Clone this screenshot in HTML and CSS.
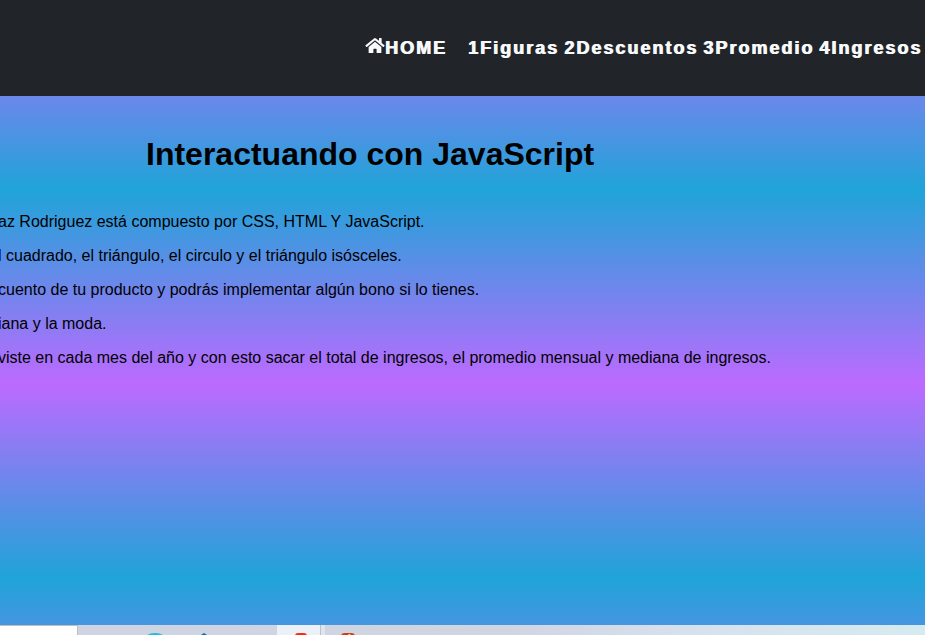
FILE: index.html
```html
<!DOCTYPE html>
<html lang="es">
<head>
<meta charset="utf-8">
<title>Interactuando con JavaScript</title>
<link rel="stylesheet" href="styles.css">
</head>
<body>
<header class="site-header">
  <nav class="menu">
    <a class="home" href="#"><svg class="home-icon" viewBox="0 0 576 512" aria-hidden="true"><path d="M280 148 96 300v164a16 16 0 0 0 16 16h112a16 16 0 0 0 16-16v-96a16 16 0 0 1 16-16h64a16 16 0 0 1 16 16v96a16 16 0 0 0 16 16h112a16 16 0 0 0 16-16V300L296 148a12 12 0 0 0-16 0z"/><path d="M572 251 488 182V44a12 12 0 0 0-12-12h-56a12 12 0 0 0-12 12v72l-90-74a48 48 0 0 0-61 0L4 251a12 12 0 0 0-1 17l25 31a12 12 0 0 0 17 2L280 107a12 12 0 0 1 16 0l235 194a12 12 0 0 0 17-2l25-31a12 12 0 0 0-1-17z"/></svg>HOME</a>
    <a href="#">1Figuras</a>
    <a href="#">2Descuentos</a>
    <a href="#">3Promedio</a>
    <a href="#">4Ingresos</a>
  </nav>
</header>
<main class="content">
  <h1>Interactuando con JavaScript</h1>
  <div class="intro">
    <p>az Rodriguez está compuesto por CSS, HTML Y JavaScript.</p>
    <p>l cuadrado, el triángulo, el circulo y el triángulo isósceles.</p>
    <p>cuento de tu producto y podrás implementar algún bono si lo tienes.</p>
    <p>iana y la moda.</p>
    <p>viste en cada mes del año y con esto sacar el total de ingresos, el promedio mensual y mediana de ingresos.</p>
  </div>
</main>
<footer class="taskbar">
  <div class="search"></div>
  <div class="apps">
    <span class="app"><svg viewBox="0 0 46 10" aria-hidden="true"><ellipse cx="22" cy="12" rx="9" ry="4" fill="#28bcd8"/></svg></span>
    <span class="app"><svg viewBox="0 0 46 10" aria-hidden="true"><path d="M20 10l3-2 3 2z" fill="#1766a8"/></svg></span>
    <span class="app"></span>
    <span class="app active"><svg viewBox="0 0 46 10" aria-hidden="true"><rect x="18" y="8" width="12" height="6" rx="3" fill="#fb2c14"/></svg></span>
    <span class="app"><svg viewBox="0 0 46 10" aria-hidden="true"><rect x="16" y="8" width="14" height="6" rx="4" fill="#d33c0b"/><path d="M23 9l3 0-2 1z" fill="#fff"/></svg></span>
  </div>
</footer>
</body>
</html>
```
FILE: styles.css
```css
* {
  box-sizing: border-box;
}

body {
  margin: 0;
  min-height: 100vh;
  display: flex;
  flex-direction: column;
  overflow-x: hidden;
  font-family: "Liberation Sans", Arial, sans-serif;
  font-size: 16px;
  line-height: 18px;
  color: #000;
}

.site-header {
  background: #212529;
  padding: 36px 3px 36px 0;
}

.menu {
  display: flex;
  justify-content: flex-end;
  gap: 5px;
  font-size: 18px;
  font-weight: 900;
  line-height: 24px;
  letter-spacing: 2px;
  white-space: nowrap;
  text-shadow: 1px 0 #f8f9fa;
}

.menu a {
  color: #f8f9fa;
  text-decoration: none;
}

.home {
  display: flex;
  align-items: baseline;
  margin-right: 16px;
}

.home-icon {
  width: 20px;
  height: 17px;
  fill: currentColor;
}

.content {
  flex: 1;
  overflow: hidden;
  padding-top: 38px;
  background: linear-gradient(#bc6aff, #1fa4d8, #bc6aff) 0 -100px / 100% 388px;
}

h1 {
  margin: 0 0 39px 146px;
  font-size: 32px;
  line-height: 40px;
}

.intro {
  margin-left: -2px;
  white-space: nowrap;
}

.intro p {
  margin: 0 0 16px;
}

.taskbar {
  display: flex;
  height: 10px;
  overflow: hidden;
  background: linear-gradient(90deg, #cfd4e2 0, #d0d5e2 55%, #d7e1ed 75%, #d5ebf0 100%);
}

.search {
  width: 78px;
  background: #fff;
  border: solid #bfbfbf;
  border-width: 1px 1px 0 0;
}

.apps {
  display: flex;
  margin-left: 55px;
}

.app {
  width: 48px;
  height: 10px;
}

.app svg {
  display: block;
  width: 46px;
  height: 10px;
}

.active {
  background: #ecf0f7;
  border-right: 4px solid #e0e4ec;
  box-shadow: inset -1px 0 #bcc1ca;
}
```
